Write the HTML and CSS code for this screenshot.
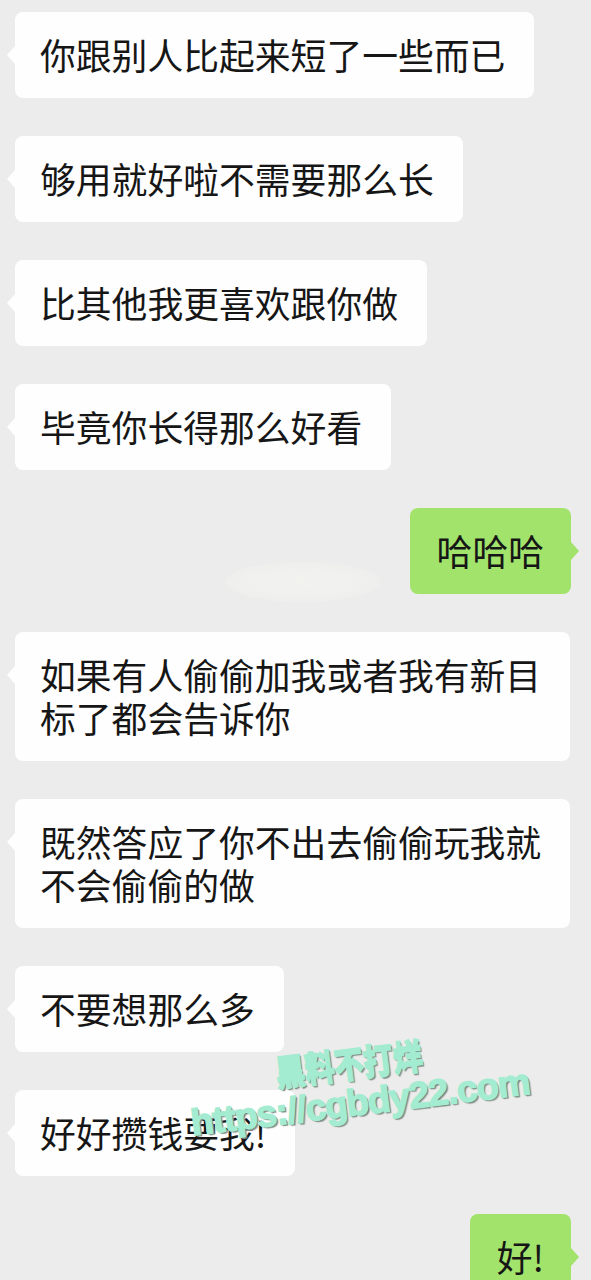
FILE: index.html
```html
<!DOCTYPE html>
<html lang="zh-CN">
<head>
<meta charset="UTF-8">
<meta name="viewport" content="width=device-width, initial-scale=1.0">
<title>聊天记录</title>
<link rel="stylesheet" href="styles.css">
</head>
<body>
    <div class="chat">
        <div class="row left"><div class="bubble">你跟别人比起来短了一些而已</div></div>
        <div class="row left"><div class="bubble">够用就好啦不需要那么长</div></div>
        <div class="row left"><div class="bubble">比其他我更喜欢跟你做</div></div>
        <div class="row left"><div class="bubble">毕竟你长得那么好看</div></div>
        <div class="row right"><div class="bubble">哈哈哈</div></div>
        <div class="row left"><div class="bubble">如果有人偷偷加我或者我有新目标了都会告诉你</div></div>
        <div class="row left"><div class="bubble">既然答应了你不出去偷偷玩我就不会偷偷的做</div></div>
        <div class="row left"><div class="bubble">不要想那么多</div></div>
        <div class="row left"><div class="bubble">好好攒钱要我!</div></div>
        <div class="row right"><div class="bubble">好!</div></div>
    </div>

    <div class="blur-spot"></div>

    <div class="watermark">
        <div class="wm-name"><span>黑料不打烊</span></div>
        <div class="wm-url">https://cgbdy22.com</div>
    </div>
</body>
</html>
```

FILE: styles.css
```css
body {
    margin: 0;
    padding: 0;
    background-color: #ececec;
    font-family: "Noto Sans CJK SC", "Noto Sans", sans-serif;
    overflow: hidden;
    height: 1280px;
    position: relative;
}

.chat {
    display: flex;
    flex-direction: column;
    gap: 38px;
    padding: 12px 20px 0 15px;
}

.row {
    display: flex;
}

.row.right {
    justify-content: flex-end;
}

.bubble {
    position: relative;
    max-width: 14em;
    padding: 21px 29px 22px 25px;
    font-size: 35.8px;
    line-height: 43px;
    color: #161616;
    background-color: #fefefe;
    border-radius: 8px;
}

.row.right .bubble {
    background-color: #a2e36c;
    padding: 21px 27px 22px 27px;
}

.bubble::before {
    content: "";
    position: absolute;
    top: 34px;
    border-top: 9px solid transparent;
    border-bottom: 9px solid transparent;
}

.row.left .bubble::before {
    left: -8px;
    border-right: 8px solid #fefefe;
}

.row.right .bubble::before {
    right: -8px;
    border-left: 8px solid #a2e36c;
}

.blur-spot {
    position: absolute;
    left: 225px;
    top: 562px;
    width: 155px;
    height: 40px;
    border-radius: 50%;
    background: radial-gradient(ellipse at center, #f2f3ef 0%, #f0f1ee 50%, rgba(236, 236, 236, 0) 100%);
}

.watermark {
    position: absolute;
    left: 183px;
    top: 1058px;
    width: 360px;
    transform: rotate(-7deg);
    transform-origin: left top;
    font-family: "Liberation Sans", "Noto Sans CJK SC", sans-serif;
    font-weight: bold;
    color: #a3ecd2;
    -webkit-text-stroke: 1.5px #a3ecd2;
    text-shadow: 1px 1px 0 #6f7a76, 2px 2px 1px #8f9894;
}

.wm-name {
    padding-left: 90px;
    font-size: 36px;
    line-height: 48px;
    font-family: "Noto Sans CJK SC", sans-serif;
    font-weight: 900;
}

.wm-name span {
    display: inline-block;
    transform: scaleX(0.82);
    transform-origin: left center;
}

.wm-url {
    font-size: 37px;
    line-height: 36px;
    letter-spacing: -1px;
}
```
